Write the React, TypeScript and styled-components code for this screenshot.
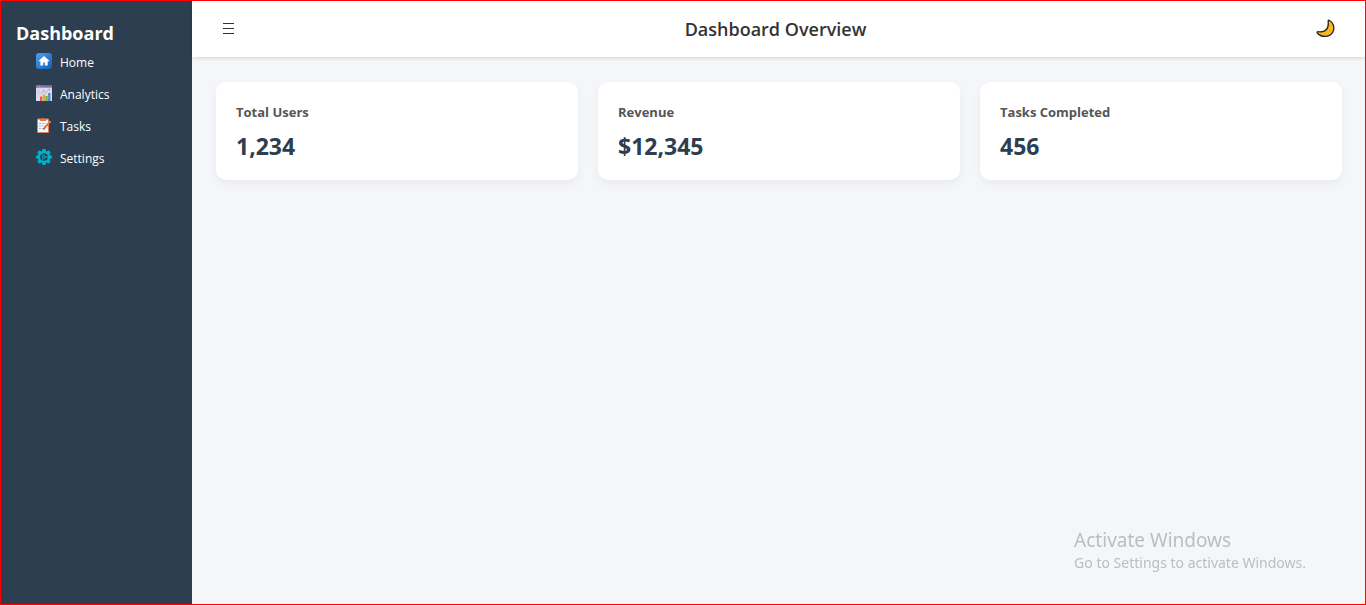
import React from "react";
import styled, { createGlobalStyle } from "styled-components";

const GlobalStyle = createGlobalStyle`
  * { box-sizing: border-box; margin: 0; padding: 0; }
  body { background: #f4f6fa; color: #333; font-family: "Open Sans", "Noto Sans", sans-serif; }
`;

const Shell = styled.div`
  display: flex;
  min-height: 100vh;
`;

const Frame = styled.div`
  position: fixed;
  inset: 0;
  border: 1px solid #ff0000;
  pointer-events: none;
  z-index: 10;
`;

const Sidebar = styled.aside`
  flex: 0 0 192px;
  padding: 20px 16px;
  background: #2c3e50;
  color: #fff;
`;

const Brand = styled.h2`
  font-size: 18px;
  line-height: 26px;
  font-weight: 700;
`;

const NavList = styled.ul`
  list-style: none;
  padding-left: 20px;
`;

const NavItem = styled.li`
  height: 32px;
`;

const NavLink = styled.a`
  display: flex;
  gap: 8px;
  color: #fff;
  font-size: 12px;
  line-height: 34px;
  text-decoration: none;

  svg { flex: none; margin-top: 7px; }
`;

const Main = styled.div`
  flex: 1;
  min-width: 0;
`;

const Header = styled.header`
  display: flex;
  align-items: center;
  justify-content: space-between;
  height: 57px;
  padding: 0 30px;
  background: #fff;
  box-shadow: 0 1px 4px rgba(0, 0, 0, 0.15);
`;

const Title = styled.h1`
  font-size: 18px;
  line-height: 24px;
  font-weight: 600;
`;

const IconButton = styled.button`
  display: flex;
  border: 0;
  background: none;
  cursor: pointer;
`;

const Cards = styled.main`
  display: grid;
  grid-template-columns: repeat(3, 1fr);
  gap: 20px;
  padding: 25px 24px;
`;

const Card = styled.section`
  padding: 20px 20px 18px;
  border-radius: 10px;
  background: #fff;
  box-shadow: 0 4px 10px rgba(0, 0, 0, 0.05);
`;

const CardLabel = styled.h3`
  color: #555;
  font-size: 13px;
  line-height: 20px;
  font-weight: 700;
`;

const CardValue = styled.p`
  margin-top: 8px;
  color: #2c3e50;
  font-size: 23px;
  line-height: 32px;
  font-weight: 700;
`;

const Watermark = styled.div`
  position: fixed;
  right: 60px;
  bottom: 32px;
  color: #bcbdc0;
  font-family: "Noto Sans", "Open Sans", sans-serif;
  pointer-events: none;
`;

const WatermarkTitle = styled.p`
  font-size: 19px;
  line-height: 26px;
`;

const WatermarkText = styled.p`
  font-size: 14px;
  line-height: 20px;
`;

const HomeIcon = () => (
  <svg width="16" height="16" viewBox="0 0 16 16" aria-hidden="true">
    <defs>
      <linearGradient id="home" x1="0" y1="0" x2="1" y2="1">
        <stop offset="0" stopColor="#4aa2ee" />
        <stop offset="1" stopColor="#125fb8" />
      </linearGradient>
    </defs>
    <rect width="16" height="16" rx="3" fill="url(#home)" />
    <path d="M8 3 2.8 7.7l.8.9.8-.6v4.6h2.8V9.4h1.7v3.2h2.8V8l.8.6.8-.9Z" fill="#fff" />
  </svg>
);

const AnalyticsIcon = () => (
  <svg width="16" height="16" viewBox="0 0 16 16" aria-hidden="true">
    <rect width="16" height="16" fill="#d9d9f2" />
    <rect width="16" height="2.6" fill="#7b6b91" />
    <path d="M1 1.3h1" stroke="#ef6b5f" />
    <path d="M3 1.3h1" stroke="#f6bd55" />
    <path d="M5 1.3h1" stroke="#7ac58c" />
    <path d="M1 5h3M1 7h3M1 9h2" stroke="#c5c4e4" strokeWidth=".7" />
    <path d="m4.5 9 3-3.3 2.2 2L13.5 4" fill="none" stroke="#a3a2cb" strokeWidth=".7" />
    <circle cx="7.5" cy="5.7" r=".7" fill="#ed8065" />
    <circle cx="13.3" cy="4.4" r=".7" fill="#6994d5" />
    <path d="M4 11.5h2.3V16H4Z" fill="#e6604f" />
    <path d="M6.7 9.5H9V16H6.7Z" fill="#f4a629" />
    <path d="M9.4 11h2.3v5H9.4Z" fill="#59b46e" />
    <path d="M12.1 8h2.3v8h-2.3Z" fill="#4f8ccf" />
  </svg>
);

const TasksIcon = () => (
  <svg width="16" height="16" viewBox="0 0 16 16" aria-hidden="true">
    <rect x="1" y="1.5" width="12" height="14.5" rx="1" fill="#d98360" />
    <path d="M2 2.8h10v12.2H2Z" fill="#f1f5fa" />
    <path d="M4 2h1.8a1.3 1.3 0 0 1 2.5 0H10v2H4Z" fill="#ed7545" />
    <path d="M5.7 6.5h4M5.7 9h3.5M5.7 11.5h2.5" stroke="#b9c7d5" strokeWidth=".9" />
    <path d="M3.5 6.5h1M3.5 9h1M3.5 11.5h1" stroke="#388bd0" strokeWidth="1.1" />
    <path d="m7 12.8.8-2.2 5-6 1.5 1.2-5.1 6Z" fill="#ed6a32" />
    <path d="m12.8 4.6.8-.9 1.5 1.2-.8.9Z" fill="#f5b087" />
    <path d="m7 12.8.6-1.7 1.2.9Z" fill="#6a4139" />
  </svg>
);

const SettingsIcon = () => (
  <svg width="16" height="16" viewBox="0 0 16 16" aria-hidden="true">
    <g fill="#00b1ca">
      {[0, 45, 90, 135, 180, 225, 270, 315].map((angle) => (
        <path key={angle} d="M5.9 3 6.4.1h3.2l.5 2.9Z" transform={`rotate(${angle} 8 8)`} />
      ))}
    </g>
    <circle cx="8" cy="8" r="5" fill="none" stroke="#00b1ca" strokeWidth="2.3" />
    <circle cx="8" cy="8" r="1.4" fill="none" stroke="#00b1ca" strokeWidth="1" />
    <path d="M9.5 8H12M7.2 6.7 6 4.4M7.2 9.3 6 11.6" stroke="#00b1ca" strokeWidth="1" />
  </svg>
);

const MenuIcon = () => (
  <svg width="13" height="16" viewBox="0 0 13 16" aria-hidden="true">
    <path d="M1 2.5h11M1 7.5h11M1 12.5h11" stroke="#333" strokeWidth="1" />
  </svg>
);

const MoonIcon = () => (
  <svg width="20" height="20" viewBox="0 0 20 20" aria-hidden="true">
    <path
      d="M13.1 1.2c4.2 2.3 6.1 7.4 3.8 11.8-2.5 4.9-11.1 6.3-15.6 1-.6-.8.1-1.6 1-1.4 2.2.4 4.3.3 6.4-.8 2.8-1.5 4.1-4.2 3.5-9.5-.1-.8.2-1.3.9-1.1Z"
      fill="#fcb827"
      stroke="#211f1b"
      strokeWidth="1.3"
      strokeLinejoin="round"
    />
    <path d="M14.4 6.3v.8M13.2 11.5h1M8.2 14.2h.8M5.3 15h.6" stroke="#e98b20" strokeWidth="1" />
  </svg>
);

const links = [
  { label: "Home", Icon: HomeIcon },
  { label: "Analytics", Icon: AnalyticsIcon },
  { label: "Tasks", Icon: TasksIcon },
  { label: "Settings", Icon: SettingsIcon },
];

const stats = [
  { label: "Total Users", value: "1,234" },
  { label: "Revenue", value: "$12,345" },
  { label: "Tasks Completed", value: "456" },
];

export default function App() {
  return (
    <>
      <GlobalStyle />
      <Shell>
        <Sidebar>
          <Brand>Dashboard</Brand>
          <nav>
            <NavList>
              {links.map(({ label, Icon }) => (
                <NavItem key={label}>
                  <NavLink href="#">
                    <Icon />
                    {label}
                  </NavLink>
                </NavItem>
              ))}
            </NavList>
          </nav>
        </Sidebar>
        <Main>
          <Header>
            <IconButton aria-label="Toggle menu"><MenuIcon /></IconButton>
            <Title>Dashboard Overview</Title>
            <IconButton aria-label="Toggle dark mode"><MoonIcon /></IconButton>
          </Header>
          <Cards>
            {stats.map(({ label, value }) => (
              <Card key={label}>
                <CardLabel>{label}</CardLabel>
                <CardValue>{value}</CardValue>
              </Card>
            ))}
          </Cards>
        </Main>
      </Shell>
      <Watermark>
        <WatermarkTitle>Activate Windows</WatermarkTitle>
        <WatermarkText>Go to Settings to activate Windows.</WatermarkText>
      </Watermark>
      <Frame />
    </>
  );
}
